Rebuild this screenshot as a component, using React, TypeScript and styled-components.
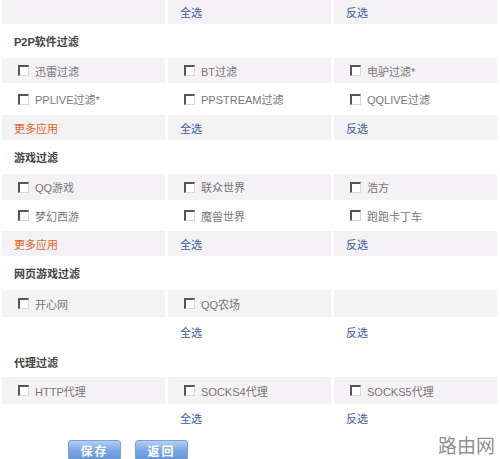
import React from "react";
import styled, { createGlobalStyle } from "styled-components";

const Global = createGlobalStyle`
  html, body { margin: 0; padding: 0; background: #fff; }
  body { font-family: "Liberation Sans", Arial, "Noto Sans CJK SC", sans-serif; font-size: 11px; }
`;

const Page = styled.div`
  position: relative;
  width: 500px;
  height: 459px;
  overflow: hidden;
  background: #fff;
`;

const Row = styled.div<{ $h: number }>`
  display: grid;
  grid-template-columns: 163px 163px 163px;
  column-gap: 3px;
  margin-left: 2px;
  height: ${(p) => p.$h}px;
`;

const Cell = styled.div<{ $gray?: boolean }>`
  display: flex;
  align-items: center;
  padding-left: 12px;
  background: ${(p) => (p.$gray ? "#f4f2f4" : "#fff")};
  color: #777;
`;

const Header = styled.div<{ $h: number }>`
  height: ${(p) => p.$h}px;
  display: flex;
  align-items: center;
  padding-left: 14px;
  font-weight: bold;
  color: #444;
  font-size: 11px;
`;

const Box = styled.span`
  box-sizing: border-box;
  width: 11px;
  height: 11px;
  margin: 0 6px 0 4px;
  background: #fff;
  border-top: 2px solid #555;
  border-left: 2px solid #555;
  border-right: 1px solid #d8d8d8;
  border-bottom: 1px solid #d8d8d8;
  flex: none;
`;

const Label = styled.span`
  color: #777;
  font-size: 11px;
`;

const Link = styled.span<{ $orange?: boolean }>`
  color: ${(p) => (p.$orange ? "#e8641e" : "#3b5ea6")};
  font-size: 11px;
`;

const ButtonBar = styled.div`
  display: flex;
  gap: 14px;
  padding-left: 68px;
  margin-top: 8px;
`;

const Btn = styled.button`
  width: 53px;
  height: 21px;
  border: 1px solid #7aa2d8;
  border-radius: 3px;
  background: linear-gradient(#b4d0f2, #7aa6e2 50%, #6496da);
  color: #fff;
  font-weight: bold;
  font-size: 12px;
  font-family: "Noto Sans CJK SC", sans-serif;
  letter-spacing: 2px;
  padding: 0;
`;

const Watermark = styled.div`
  position: absolute;
  right: 5px;
  bottom: 1px;
  font-family: "Noto Sans CJK SC", sans-serif;
  font-size: 19px;
  color: #909090;
`;

const Check = ({ text }: { text: string }) => (
  <>
    <Box />
    <Label>{text}</Label>
  </>
);

const LinkRow = ({ h, gray, more }: { h: number; gray?: boolean; more?: boolean }) => (
  <Row $h={h}>
    <Cell $gray={gray}>{more && <Link $orange>更多应用</Link>}</Cell>
    <Cell $gray={gray}>
      <Link>全选</Link>
    </Cell>
    <Cell $gray={gray}>
      <Link>反选</Link>
    </Cell>
  </Row>
);

const CheckRow = ({ h, gray, items }: { h: number; gray?: boolean; items: string[] }) => (
  <Row $h={h}>
    {[0, 1, 2].map((i) => (
      <Cell key={i} $gray={gray}>
        {items[i] ? <Check text={items[i]} /> : null}
      </Cell>
    ))}
  </Row>
);

export default function App() {
  return (
    <Page>
      <Global />
      <LinkRow h={24} gray />
      <Header $h={34}>P2P软件过滤</Header>
      <CheckRow h={25} gray items={["迅雷过滤", "BT过滤", "电驴过滤*"]} />
      <CheckRow h={32} items={["PPLIVE过滤*", "PPSTREAM过滤", "QQLIVE过滤"]} />
      <LinkRow h={25} gray more />
      <Header $h={34}>游戏过滤</Header>
      <CheckRow h={26} gray items={["QQ游戏", "联众世界", "浩方"]} />
      <CheckRow h={31} items={["梦幻西游", "魔兽世界", "跑跑卡丁车"]} />
      <LinkRow h={25} gray more />
      <Header $h={34}>网页游戏过滤</Header>
      <CheckRow h={27} gray items={["开心网", "QQ农场"]} />
      <LinkRow h={30} />
      <Header $h={30}>代理过滤</Header>
      <CheckRow h={27} gray items={["HTTP代理", "SOCKS4代理", "SOCKS5代理"]} />
      <LinkRow h={28} />
      <ButtonBar>
        <Btn>保存</Btn>
        <Btn>返回</Btn>
      </ButtonBar>
      <Watermark>路由网</Watermark>
    </Page>
  );
}
